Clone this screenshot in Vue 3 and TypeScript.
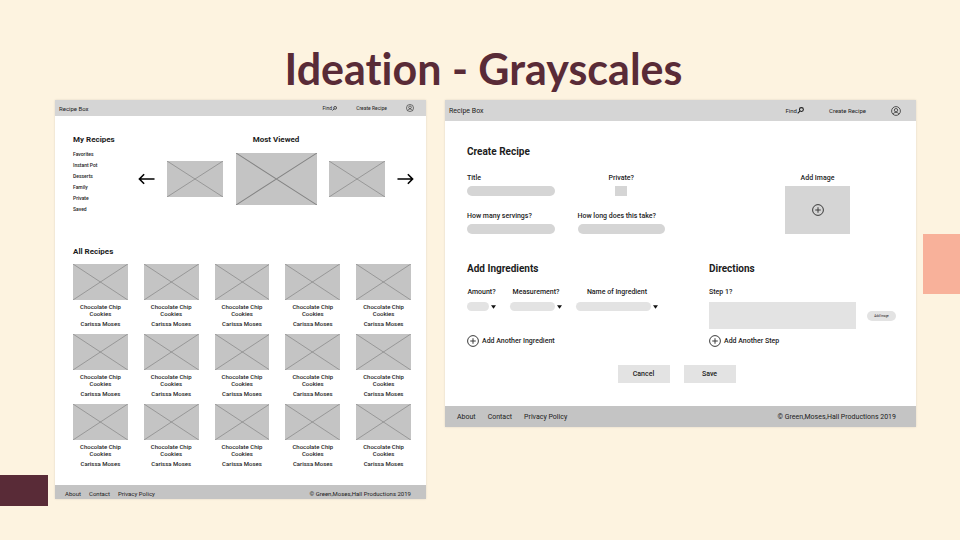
<script setup lang="ts">
interface Recipe {
  id: number
  title: string
  author: string
}

interface IngredientField {
  id: string
  label: string
  size: string
}

const categories: string[] = ['Favorites', 'Instant Pot', 'Desserts', 'Family', 'Private', 'Saved']
const footerLinks: string[] = ['About', 'Contact', 'Privacy Policy']
const copyright = '© Green,Moses,Hall Productions 2019'

const recipes: Recipe[] = Array.from({ length: 15 }, (_, id) => ({
  id,
  title: 'Chocolate Chip Cookies',
  author: 'Carissa Moses',
}))

const slides: string[] = ['small', 'large', 'small']

const ingredientFields: IngredientField[] = [
  { id: 'amount', label: 'Amount?', size: 'short' },
  { id: 'measurement', label: 'Measurement?', size: 'medium' },
  { id: 'ingredient', label: 'Name of Ingredient', size: 'long' },
]
</script>

<template>
  <div class="slide">
    <div class="accent accent-plum"></div>
    <div class="accent accent-peach"></div>

    <h1 class="slide-title">Ideation - Grayscales</h1>

    <div class="screens">
      <section class="screen browse">
        <header class="topbar">
          <span class="brand">Recipe Box</span>
          <nav class="actions">
            <a href="#" class="find">Find<svg class="search-icon" viewBox="0 0 10 10"><circle cx="6.3" cy="3.7" r="2.8" /><path d="M4.2 5.8 1 9" /></svg></a>
            <a href="#">Create Recipe</a>
            <a href="#" aria-label="Account" class="account">
              <svg class="avatar" viewBox="0 0 24 24"><circle cx="12" cy="12" r="10.6" /><circle cx="12" cy="10" r="4" /><path d="M5 19.5c1.500-3 4-4.200 7-4.200s5.500 1.200 7 4.200" /></svg>
            </a>
          </nav>
        </header>

        <div class="browse-body">
          <div class="browse-top">
            <nav class="categories">
              <h2>My Recipes</h2>
              <a v-for="category in categories" :key="category" href="#">{{ category }}</a>
            </nav>
            <div class="featured">
              <h2>Most Viewed</h2>
              <div class="carousel">
                <button type="button" class="arrow" aria-label="Previous">
                  <svg viewBox="0 0 18 12"><path d="M17.500 6H1.500M6.500 1 1.500 6l5 5" /></svg>
                </button>
                <svg
                  v-for="(slide, index) in slides"
                  :key="index"
                  class="picture"
                  :class="slide"
                  viewBox="0 0 56 36"
                  preserveAspectRatio="none"
                ><path d="M0 0 56 36M56 0 0 36" /></svg>
                <button type="button" class="arrow" aria-label="Next">
                  <svg viewBox="0 0 18 12"><path d="M.5 6h16M11.500 1l5 5-5 5" /></svg>
                </button>
              </div>
            </div>
          </div>

          <h2 class="all-heading">All Recipes</h2>
          <div class="recipe-grid">
            <article v-for="recipe in recipes" :key="recipe.id" class="recipe">
              <svg class="picture" viewBox="0 0 56 36" preserveAspectRatio="none"><path d="M0 0 56 36M56 0 0 36" /></svg>
              <h3>{{ recipe.title }}</h3>
              <p>{{ recipe.author }}</p>
            </article>
          </div>
        </div>

        <footer class="bottombar">
          <nav>
            <a v-for="link in footerLinks" :key="link" href="#">{{ link }}</a>
          </nav>
          <span>{{ copyright }}</span>
        </footer>
      </section>

      <section class="screen create">
        <header class="topbar">
          <span class="brand">Recipe Box</span>
          <nav class="actions">
            <a href="#" class="find">Find<svg class="search-icon" viewBox="0 0 10 10"><circle cx="6.3" cy="3.7" r="2.8" /><path d="M4.2 5.8 1 9" /></svg></a>
            <a href="#">Create Recipe</a>
            <a href="#" aria-label="Account" class="account">
              <svg class="avatar" viewBox="0 0 24 24"><circle cx="12" cy="12" r="10.6" /><circle cx="12" cy="10" r="4" /><path d="M5 19.5c1.500-3 4-4.200 7-4.200s5.500 1.200 7 4.200" /></svg>
            </a>
          </nav>
        </header>

        <form class="create-body" @submit.prevent>
          <h2>Create Recipe</h2>
          <div class="details">
            <div class="fields">
              <div class="field">
                <label for="title">Title</label>
                <input id="title" type="text" />
              </div>
              <div class="field centered">
                <label for="private">Private?</label>
                <input id="private" type="checkbox" />
              </div>
              <div class="field">
                <label for="servings">How many servings?</label>
                <input id="servings" type="text" />
              </div>
              <div class="field">
                <label for="duration">How long does this take?</label>
                <input id="duration" type="text" />
              </div>
            </div>
            <div class="field centered image-field">
              <label for="image">Add Image</label>
              <button id="image" type="button" class="image-drop" aria-label="Add Image">
                <svg class="plus" viewBox="0 0 24 24"><circle cx="12" cy="12" r="10.800" /><path d="M12 6.500v11M6.500 12h11" /></svg>
              </button>
            </div>
          </div>

          <div class="lists">
            <div>
              <h2>Add Ingredients</h2>
              <div class="ingredients">
                <div v-for="field in ingredientFields" :key="field.id" class="ingredient" :class="field.size">
                  <label :for="field.id">{{ field.label }}</label>
                  <div class="select-row">
                    <select :id="field.id"></select>
                    <svg class="caret" viewBox="0 0 6 4"><path d="M0 0h6L3 4Z" /></svg>
                  </div>
                </div>
              </div>
              <button type="button" class="add">
                <svg class="plus" viewBox="0 0 24 24"><circle cx="12" cy="12" r="10.800" /><path d="M12 6.500v11M6.500 12h11" /></svg>
                Add Another Ingredient
              </button>
            </div>

            <div class="directions">
              <h2>Directions</h2>
              <label for="step">Step 1?</label>
              <div class="step-row">
                <textarea id="step"></textarea>
                <button type="button" class="step-image">Add Image</button>
              </div>
              <button type="button" class="add">
                <svg class="plus" viewBox="0 0 24 24"><circle cx="12" cy="12" r="10.800" /><path d="M12 6.500v11M6.500 12h11" /></svg>
                Add Another Step
              </button>
            </div>
          </div>

          <div class="form-actions">
            <button type="button">Cancel</button>
            <button type="submit">Save</button>
          </div>
        </form>

        <footer class="bottombar">
          <nav>
            <a v-for="link in footerLinks" :key="link" href="#">{{ link }}</a>
          </nav>
          <span>{{ copyright }}</span>
        </footer>
      </section>
    </div>
  </div>
</template>

<style>
body {
  margin: 0;
  background: #fdf3e0;
}
</style>

<style scoped>
.slide {
  position: relative;
  box-sizing: border-box;
  min-height: 100vh;
  padding: 44px 44px 40px 55px;
  background: #fdf3e0;
  color: #1c1c1c;
  font-family: Roboto, "Liberation Sans", sans-serif;
}

.slide *,
.slide *::before {
  box-sizing: border-box;
}

.accent {
  position: absolute;
}

.accent-plum {
  left: 0;
  top: 475px;
  width: 48px;
  height: 31px;
  background: #592b37;
}

.accent-peach {
  right: 0;
  top: 234px;
  width: 37px;
  height: 60px;
  background: #f8b19a;
}

.slide-title {
  margin: 0 4px 6px 0;
  color: #592b37;
  font-family: Lato, "Open Sans", sans-serif;
  font-size: 43px;
  font-variant-ligatures: none;
  font-weight: 700;
  line-height: 50px;
  text-align: center;
}

.screens {
  display: grid;
  grid-template-columns: 371fr 471fr;
  column-gap: 19px;
  align-items: start;
}

.screen {
  background: #fff;
  box-shadow: 0 0 2px rgba(0, 0, 0, 0.12);
}

h2,
h3,
p {
  margin: 0;
}

h2 {
  font-weight: 700;
  line-height: 12px;
}

a {
  color: inherit;
  text-decoration: none;
}

button,
input,
select,
textarea {
  margin: 0;
  padding: 0;
  border: 0;
  border-radius: 0;
  background: none;
  color: inherit;
  font: inherit;
  appearance: none;
}

svg {
  display: block;
  fill: none;
  stroke: currentColor;
}

.topbar,
.bottombar {
  display: flex;
  align-items: center;
  justify-content: space-between;
  white-space: nowrap;
}

.topbar {
  background: #d5d5d5;
}

.bottombar {
  background: #c4c4c4;
}

.actions,
.bottombar nav,
.find {
  display: flex;
  align-items: center;
}

.search-icon {
  stroke-width: 1.5;
}

.avatar {
  color: #3a3a3a;
  stroke-width: 2;
}

/* Browse screen */
.browse .topbar {
  height: 16px;
  padding: 0 12px 0 4px;
  font-size: 6px;
}

.browse .actions {
  gap: 19px;
  font-size: 5px;
}

.browse .search-icon {
  width: 5px;
  height: 5px;
}

.browse .avatar {
  width: 8px;
  height: 8px;
}

.browse h2 {
  font-size: 8px;
}

.browse-body {
  padding: 18px 15px 18px 18px;
}

.browse-top {
  display: grid;
  grid-template-columns: 65px 1fr;
  margin-right: -3px;
}

.categories {
  display: flex;
  flex-direction: column;
  font-size: 5px;
  font-weight: 500;
  line-height: 11px;
  white-space: nowrap;
}

.categories h2 {
  margin-bottom: 3px;
}

.featured h2 {
  margin-bottom: 7px;
  text-align: center;
}

.carousel {
  display: flex;
  align-items: center;
  justify-content: space-between;
}

.arrow {
  width: 17px;
  height: 12px;
  color: #000;
}

.arrow svg {
  width: 17px;
  height: 12px;
  stroke-width: 1.7;
}

.picture {
  width: 100%;
  height: 36px;
  background: #c4c4c4;
  stroke: #848484;
  stroke-width: 0.7;
}

.picture.small {
  width: 56px;
}

.picture.large {
  width: 81px;
  height: 52px;
}

.all-heading {
  margin: 31px 0 6px;
}

.recipe-grid {
  display: grid;
  grid-template-columns: repeat(5, 1fr);
  gap: 7px 16px;
}

.recipe {
  font-size: 6px;
  font-weight: 500;
  line-height: 7px;
  text-align: center;
}

.recipe h3 {
  margin: 3px 6px;
  font-size: 6px;
  font-weight: 500;
}

.browse .bottombar {
  height: 14px;
  padding: 2px 15px 0 10px;
  font-size: 6px;
}

.browse .bottombar nav {
  gap: 8px;
}

/* Create screen */
.create {
  font-size: 7px;
}

.create .topbar {
  height: 21px;
  padding: 0 15px 0 4px;
}

.create .actions {
  gap: 25px;
  font-size: 6px;
}

.create .search-icon {
  width: 7px;
  height: 7px;
}

.create .avatar {
  width: 10px;
  height: 10px;
}

.create h2 {
  font-size: 10px;
}

.create-body {
  padding: 25px 20px 23px 22px;
  font-weight: 500;
  line-height: 8px;
  white-space: nowrap;
}

.details {
  display: grid;
  grid-template-columns: 198fr 120fr 65fr 46fr;
  margin: 16px 0 29px;
}

.fields {
  display: grid;
  grid-template-columns: 1fr 1fr;
  gap: 16px 23px;
}

.field {
  display: flex;
  flex-direction: column;
  gap: 4px;
}

.centered {
  align-items: center;
}

.image-field {
  grid-column: 3;
}

input[type='text'] {
  width: 100%;
  height: 10px;
  padding: 0 5px;
  border-radius: 5px;
  background: #d5d5d5;
}

input[type='checkbox'] {
  width: 12px;
  height: 10px;
  background: #d5d5d5;
}

.image-drop {
  display: flex;
  align-items: center;
  justify-content: center;
  width: 100%;
  height: 48px;
  background: #d5d5d5;
}

.plus {
  width: 12px;
  height: 12px;
  color: #3a3a3a;
  stroke-width: 2;
}

.lists {
  display: grid;
  grid-template-columns: 242fr 187fr;
}

.lists h2 {
  margin-bottom: 13px;
}

.ingredients {
  display: flex;
  gap: 14px;
}

.ingredient {
  display: flex;
  flex-direction: column;
  align-items: center;
  gap: 6px;
}

.short {
  width: 29px;
}

.medium {
  width: 52px;
}

.long {
  width: 82px;
}

.select-row {
  display: flex;
  align-items: center;
  gap: 2px;
  width: 100%;
}

select {
  flex: 1;
  min-width: 0;
  height: 9px;
  border-radius: 5px;
  background: #e3e3e3;
}

.caret {
  width: 5px;
  height: 4px;
  fill: #111;
  stroke: none;
}

.add {
  display: flex;
  align-items: center;
  gap: 3px;
  margin-top: 6px;
  line-height: 12px;
}

.ingredients + .add {
  margin-top: 24px;
}

.directions label {
  display: block;
  margin-bottom: 6px;
}

.step-row {
  display: flex;
  align-items: center;
  gap: 11px;
}

textarea {
  flex: 1;
  min-width: 0;
  height: 27px;
  background: #e3e3e3;
  resize: none;
}

.step-image {
  width: 29px;
  height: 10px;
  border-radius: 5px;
  background: #e3e3e3;
  font-size: 3px;
  font-weight: 400;
  text-align: center;
}

.form-actions {
  display: flex;
  justify-content: center;
  gap: 14px;
  margin: 18px 10px 0 0;
}

.form-actions button {
  width: 52px;
  height: 18px;
  background: #e3e3e3;
}

.create .bottombar {
  height: 21px;
  padding: 0 20px 0 12px;
}

.create .bottombar nav {
  gap: 12px;
}
</style>
